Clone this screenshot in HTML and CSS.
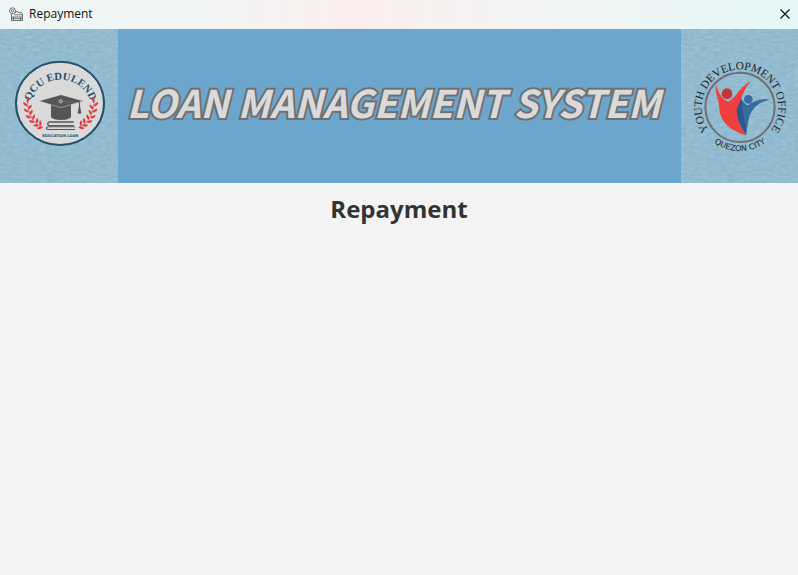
FILE: index.html
```html
<!DOCTYPE html>
<html lang="en">
<head>
<meta charset="utf-8">
<title>Repayment</title>
<link rel="stylesheet" href="styles.css">
</head>
<body>
<div class="window">
  <header class="titlebar">
    <svg class="app-icon" viewBox="0 0 14 14" aria-hidden="true">
      <g fill="none" stroke="#555" stroke-width="0.8">
        <circle cx="3.5" cy="3.8" r="3"/><circle cx="3.5" cy="3.8" r="1.2"/>
        <path d="M2.5 7v6.5h11V7M2.5 10h11M2.5 11.7h11M5 7.8h8.5M6 6l2-2 2 2 2-1 1.5 2M4.5 10v3.5M11.5 10v3.5"/>
      </g>
    </svg>
    <span class="window-title">Repayment</span>
    <button class="close" type="button" aria-label="Close">
      <svg viewBox="0 0 10 10" aria-hidden="true"><path d="M0.5 0.5l9 9M9.5 0.5l-9 9" fill="none" stroke="#111" stroke-width="1.2"/></svg>
    </button>
  </header>

  <div class="banner">
    <svg class="emblem" viewBox="0 0 118 154" preserveAspectRatio="xMidYMid slice" role="img" aria-label="QCU Edulend">
      <defs>
        <filter id="paper" x="0" y="0" width="100%" height="100%" color-interpolation-filters="sRGB">
          <feTurbulence type="fractalNoise" baseFrequency="0.15 0.4" numOctaves="2" seed="4"/>
          <feColorMatrix values="0.12 0 0 0 0.515  0.09 0 0 0 0.69  0.07 0 0 0 0.78  0 0 0 0 1"/>
        </filter>
        <path id="leaf" d="M0 0C-7-3-9-10-6-17C0-13 3-6 0 0z"/>
        <g id="laurel" fill="#e33b40">
          <path d="M128 232C100 220 83 195 82 150" fill="none" stroke="#e33b40" stroke-width="2"/>
          <use href="#leaf" transform="translate(82 158) rotate(35)"/>
          <use href="#leaf" transform="translate(82 169) rotate(-25)"/>
          <use href="#leaf" transform="translate(84 178) rotate(60)"/>
          <use href="#leaf" transform="translate(86 187) rotate(-35)"/>
          <use href="#leaf" transform="translate(89 195) rotate(50)"/>
          <use href="#leaf" transform="translate(93 204) rotate(-45)"/>
          <use href="#leaf" transform="translate(98 210) rotate(40)"/>
          <use href="#leaf" transform="translate(104 217) rotate(-55)"/>
          <use href="#leaf" transform="translate(110 221) rotate(30)"/>
          <use href="#leaf" transform="translate(117 227) rotate(-65)"/>
          <use href="#leaf" transform="translate(128 231) rotate(-85)"/>
          <use href="#leaf" transform="translate(122 228) rotate(15)"/>
        </g>
      </defs>
      <rect width="118" height="154" filter="url(#paper)"/>
      <g transform="translate(0 21) scale(0.33333)">
        <ellipse cx="180" cy="160" rx="132" ry="125" fill="#dadada" stroke="#23516f" stroke-width="6"/>
        <path id="name-arc" d="M86 184A95 95 0 0 1 276 184" fill="none"/>
        <text class="edulend"><textPath href="#name-arc" startOffset="50%">QCU EDULEND</textPath></text>
        <use href="#laurel"/>
        <use href="#laurel" transform="translate(364 0) scale(-1 1)"/>
        <g fill="#555">
          <path d="M153 162v38q2 9 30 10q28-1 30-10v-38z"/>
          <path d="M117 153l66-19 67 19-67 20z" stroke="#dadada" stroke-width="1.5"/>
          <path d="M184 154l55 4v12" fill="none" stroke="#888" stroke-width="1.5"/>
          <circle cx="182" cy="154" r="5" fill="#777" stroke="#dadada" stroke-width="2"/>
          <path d="M237 156h3v12l4 21q-6 5-11 0l4-21z"/>
          <path d="M147 214h74v4h-74q-4 4 0 7h74v3h-76q-9-7 2-14zM143 229h82v3h-82q-4 3 0 5h82v3h-84q-8-6 2-11z"/>
        </g>
        <text class="education" x="181" y="262">EDUCATION LOAN</text>
      </g>
    </svg>

    <h1 class="system-name">LOAN MANAGEMENT SYSTEM</h1>

    <svg class="emblem" viewBox="0 0 117 154" preserveAspectRatio="xMidYMid slice" role="img" aria-label="Youth Development Office, Quezon City">
      <rect width="117" height="154" filter="url(#paper)"/>
      <g transform="translate(-1 21) scale(0.33333)">
        <circle cx="180" cy="172" r="104" fill="none" stroke="#6d7073" stroke-width="6"/>
        <path id="office-arc" d="M100 256A115 115 0 1 1 260 256" fill="none"/>
        <text class="office"><textPath href="#office-arc" startOffset="50%">YOUTH DEVELOPMENT OFFICE</textPath></text>
        <path id="city-arc" d="M76 252A131 131 0 0 0 284 252" fill="none"/>
        <text class="city"><textPath href="#city-arc" startOffset="50%">QUEZON CITY</textPath></text>
        <path d="M174 119C180 138 187 158 203 166C224 152 242 145 270 149C236 155 216 174 207 204C203 222 201 238 198 256C187 235 172 214 169 187C167 169 181 142 174 119z" fill="#376ca3"/>
        <path d="M178 133C185 148 187 162 188 178C190 204 200 229 198 256C185 232 171 214 169 187C167 170 178 152 178 133z" fill="#2d588b"/>
        <path d="M213 93C196 109 186 140 170 177C168 211 184 234 198 256C156 244 119 217 118 175C117 147 103 127 108 103C114 128 126 149 144 155C165 148 180 109 213 93z" fill="#ef3e3e"/>
        <circle cx="141" cy="131" r="16" fill="#c53436"/>
        <circle cx="205" cy="148" r="13" fill="#376ca3"/>
      </g>
    </svg>
  </div>

  <main class="content">
    <h2 class="page-title">Repayment</h2>
  </main>
</div>
</body>
</html>
```

FILE: styles.css
```css
* {
  box-sizing: border-box;
}

body {
  margin: 0;
  background: #f4f4f4;
  color: #333;
  font-family: "Open Sans", "Noto Sans", sans-serif;
}

.window {
  display: flex;
  flex-direction: column;
  min-height: 100vh;
}

.titlebar {
  display: flex;
  align-items: center;
  gap: 6px;
  height: 29px;
  padding: 0 8px 2px 9px;
  background: linear-gradient(90deg, #edf6f6, #f1f5f4 25%, #fbefee 44%, #f1f5f4 70%, #e5f7f8);
}

.app-icon {
  width: 14px;
  height: 14px;
}

.window-title {
  flex: 1;
  color: #111;
  font-size: 12px;
  line-height: 16px;
}

.close {
  display: flex;
  padding: 0;
  border: 0;
  background: none;
}

.close svg {
  width: 10px;
  height: 10px;
}

.banner {
  display: grid;
  grid-template-columns: 118px minmax(0, 1fr) 117px;
  align-items: center;
  background: #6da6cc;
}

.emblem {
  display: block;
  width: 100%;
  height: 154px;
}

.system-name {
  margin: 0;
  padding: 0 12px 8px 0;
  color: #dadada;
  font-family: "Noto Sans CJK JP", sans-serif;
  font-size: 38px;
  font-style: italic;
  font-weight: 700;
  line-height: 56px;
  text-align: center;
  white-space: nowrap;
  -webkit-text-stroke: 4px #707070;
  paint-order: stroke fill;
}

.edulend {
  fill: #23516f;
  font: 700 32px "Liberation Serif", serif;
  text-anchor: middle;
}

.education {
  fill: #23516f;
  font: 700 11px "DejaVu Sans", sans-serif;
  text-anchor: middle;
}

.office {
  fill: #222;
  font: 34px "Liberation Serif", serif;
  text-anchor: middle;
}

.city {
  fill: #222;
  font: 24px "DejaVu Sans", sans-serif;
  text-anchor: middle;
}

.content {
  flex: 1;
  padding: 8px 16px;
}

.page-title {
  margin: 0;
  font-size: 24px;
  font-weight: 700;
  line-height: 36px;
  text-align: center;
}
```
